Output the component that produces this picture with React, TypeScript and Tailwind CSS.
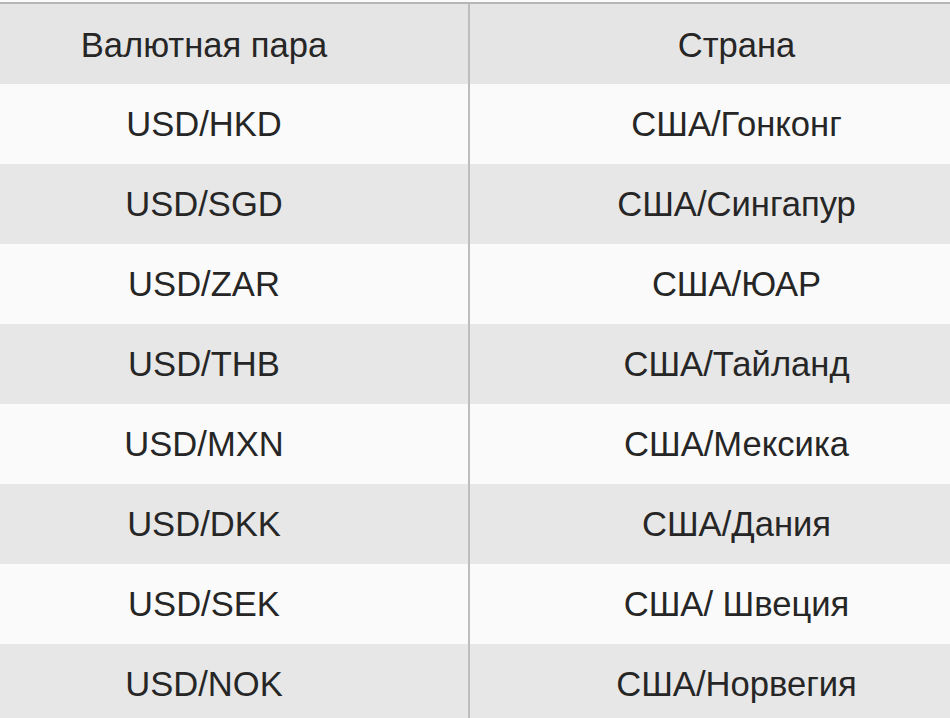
const rows: [string, string][] = [
  ['USD/HKD', 'США/Гонконг'],
  ['USD/SGD', 'США/Сингапур'],
  ['USD/ZAR', 'США/ЮАР'],
  ['USD/THB', 'США/Тайланд'],
  ['USD/MXN', 'США/Мексика'],
  ['USD/DKK', 'США/Дания'],
  ['USD/SEK', 'США/ Швеция'],
  ['USD/NOK', 'США/Норвегия'],
];

function Row({ left, right, bg, head }: { left: string; right: string; bg: string; head?: boolean }) {
  const pad = head ? 'pt-[3px]' : 'pt-[1px]';
  return (
    <div className={`grid h-[80px] grid-cols-[468px_482px] text-[34.6px] ${bg}`}>
      <div className={`flex items-center justify-center pr-[60px] ${pad}`}>{left}</div>
      <div className={`flex items-center justify-center border-l-2 border-[#bdbdbd] pl-[53px] ${pad}`}>{right}</div>
    </div>
  );
}

export default function App() {
  return (
    <div
      className="h-[718px] w-[950px] overflow-hidden bg-[#fafafa] pt-[2px] text-[#262626]"
      style={{ fontFamily: '"Liberation Sans", Arial, sans-serif' }}
    >
      <div className="border-t-2 border-[#b5b5b5]">
        <Row left="Валютная пара" right="Страна" bg="bg-[#e6e5e5]" head />
        {rows.map(([l, r], i) => (
          <Row key={l} left={l} right={r} bg={i % 2 === 0 ? 'bg-[#fafafa]' : 'bg-[#e8e7e7]'} />
        ))}
      </div>
    </div>
  );
}
